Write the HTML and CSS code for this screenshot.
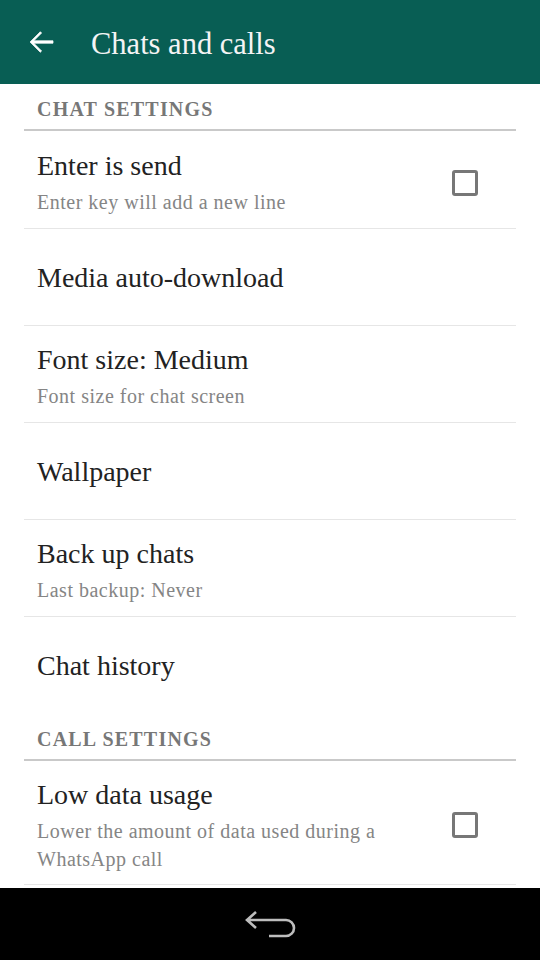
FILE: index.html
```html
<!DOCTYPE html>
<html>
<head>
<meta charset="utf-8">
<link rel="stylesheet" href="styles.css">
</head>
<body>
<div class="screen">
  <header class="appbar">
    <svg class="back" width="36" height="36" viewBox="0 0 24 24"><path d="M20 11.2H7.2l5.2-5.2-0.85-0.85L4.7 12l6.85 6.85 0.85-0.85-5.2-5.2H20z" fill="#fff" stroke="#fff" stroke-width="0.5" stroke-linejoin="miter"/></svg>
    <h1 class="title">Chats and calls</h1>
  </header>
  <main class="list">
    <div class="section">CHAT SETTINGS</div>
    <div class="row two first">
      <div class="text"><div class="t">Enter is send</div><div class="s">Enter key will add a new line</div></div>
      <div class="check"></div>
    </div>
    <div class="row"><div class="text"><div class="t">Media auto-download</div></div></div>
    <div class="row two"><div class="text"><div class="t">Font size: Medium</div><div class="s">Font size for chat screen</div></div></div>
    <div class="row"><div class="text"><div class="t">Wallpaper</div></div></div>
    <div class="row two"><div class="text"><div class="t">Back up chats</div><div class="s">Last backup: Never</div></div></div>
    <div class="row last"><div class="text"><div class="t">Chat history</div></div></div>
    <div class="section">CALL SETTINGS</div>
    <div class="row tall">
      <div class="text"><div class="t">Low data usage</div><div class="s">Lower the amount of data used during a WhatsApp call</div></div>
      <div class="check"></div>
    </div>
  </main>
  <nav class="navbar">
    <svg width="60" height="40" viewBox="240 906 60 40"><path d="M247 922H286A8 8 0 0 1 286 938H269M256 914L247 922L256 930" fill="none" stroke="#bdbdbd" stroke-width="2.6" stroke-linejoin="miter"/></svg>
  </nav>
</div>
</body>
</html>
```
FILE: styles.css
```css
* { box-sizing: border-box; margin: 0; padding: 0; }
html, body { width: 540px; height: 960px; overflow: hidden; background: #fff; }
body { font-family: "Liberation Serif", "DejaVu Serif", serif; }
.screen { display: flex; flex-direction: column; height: 960px; }
.appbar { height: 84px; background: #085e54; display: flex; align-items: center; padding-left: 23px; flex: none; }
.back { flex: none; }
.title { font-weight: normal; color: #f4f4f4; font-size: 30.5px; margin-left: 32px; line-height: 36px; padding-top: 3px; }
.list { flex: 1; margin: 0 24px; overflow: hidden; }
.section { height: 47px; padding: 13px 13px 0; line-height: 24px; font-size: 20px; font-weight: bold; color: #777; letter-spacing: 1.2px; border-bottom: 2.5px solid #c9c9c9; }
.row { min-height: 97px; display: flex; align-items: center; padding: 1px 13px 0; border-bottom: 1px solid #e6e6e6; }
.row.two { padding-top: 5px; }
.row.first { min-height: 98px; padding-top: 6px; }
.row.last { border-bottom: none; }
.row.tall { min-height: 124px; padding-top: 5px; }
.text { flex: 1; }
.t { font-size: 28px; line-height: 34px; color: #222; }
.s { font-size: 20px; letter-spacing: 0.5px; line-height: 28px; color: #858585; margin-top: 5px; padding-right: 30px; }
.check { width: 26px; height: 26px; border: 3px solid #777; border-radius: 3px; margin-right: 25px; flex: none; }
.navbar { height: 72px; background: #000; flex: none; display: flex; align-items: center; justify-content: center; }
```
